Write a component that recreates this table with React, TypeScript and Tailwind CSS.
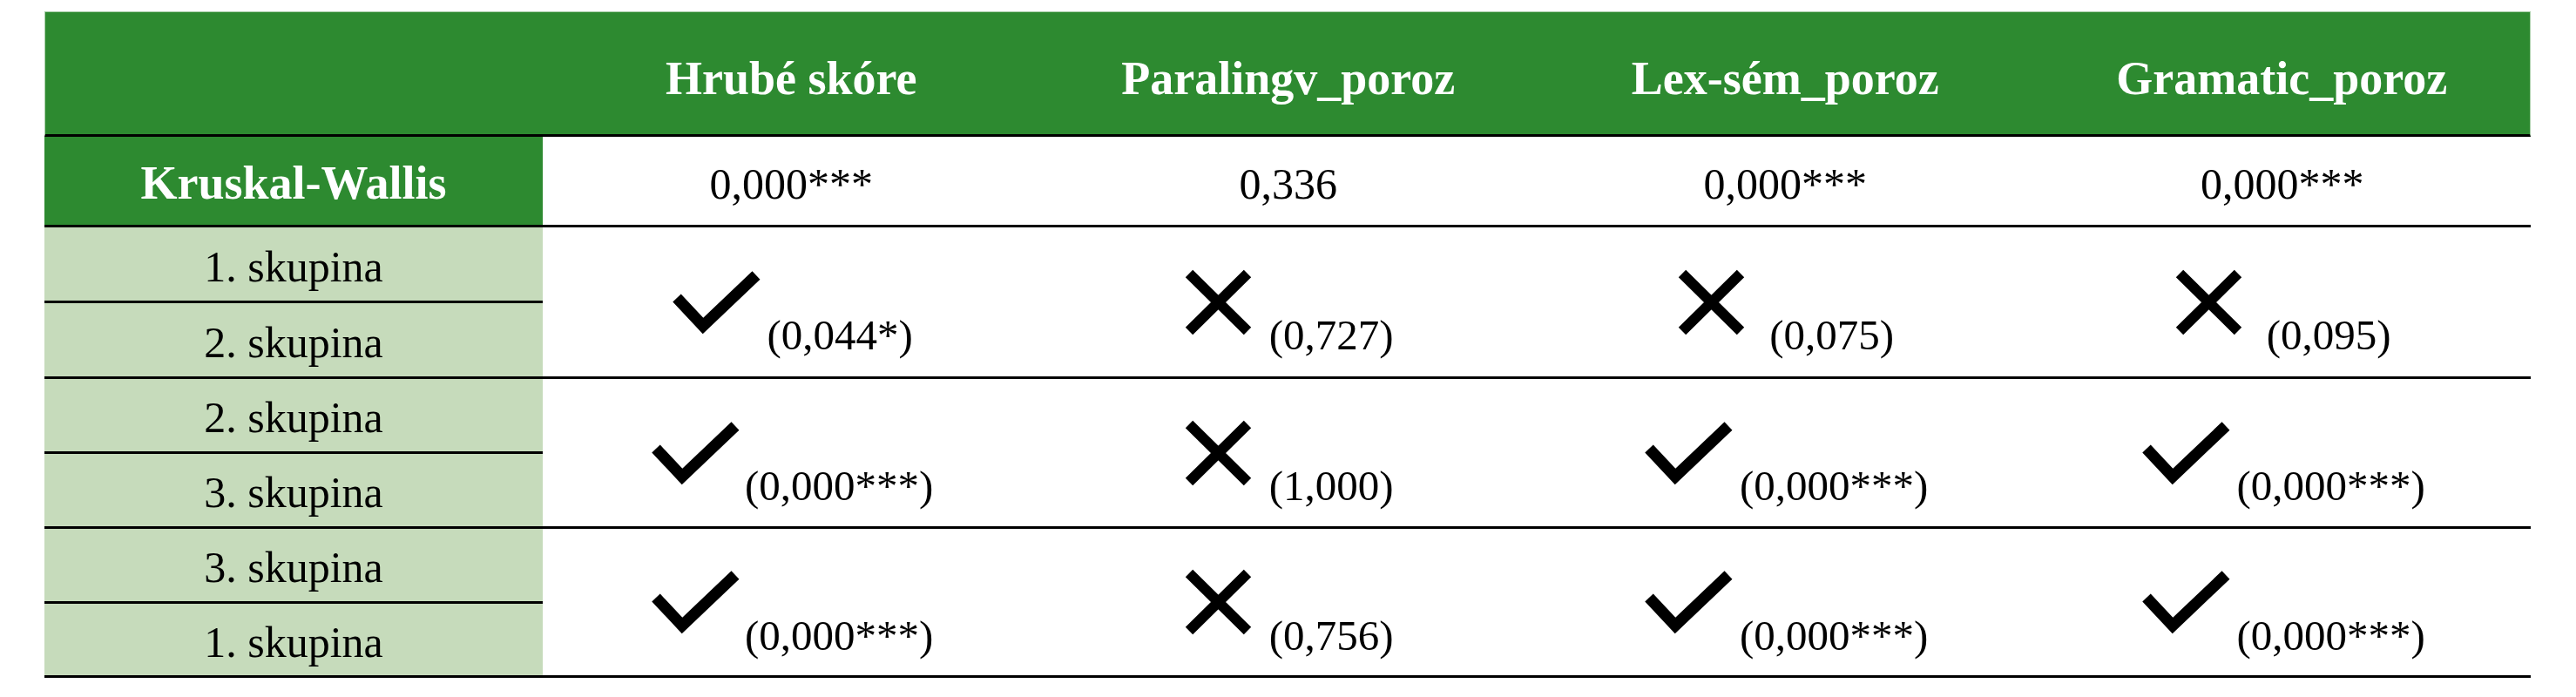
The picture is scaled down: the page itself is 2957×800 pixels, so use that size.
import React from 'react';

type Cell = { ok: boolean; p: string; gap: string };

interface Group {
  first: string;
  second: string;
  cells: Cell[];
}

const groups: Group[] = [
  {
    first: '1. skupina',
    second: '2. skupina',
    cells: [
      { ok: true, p: '(0,044*)', gap: 'gap-[6px]' },
      { ok: false, p: '(0,727)', gap: 'gap-[18px]' },
      { ok: false, p: '(0,075)', gap: 'gap-[26px]' },
      { ok: false, p: '(0,095)', gap: 'gap-[26px]' },
    ],
  },
  {
    first: '2. skupina',
    second: '3. skupina',
    cells: [
      { ok: true, p: '(0,000***)', gap: 'gap-[4px]' },
      { ok: false, p: '(1,000)', gap: 'gap-[18px]' },
      { ok: true, p: '(0,000***)', gap: 'gap-[6px]' },
      { ok: true, p: '(0,000***)', gap: 'gap-[6px]' },
    ],
  },
  {
    first: '3. skupina',
    second: '1. skupina',
    cells: [
      { ok: true, p: '(0,000***)', gap: 'gap-[4px]' },
      { ok: false, p: '(0,756)', gap: 'gap-[18px]' },
      { ok: true, p: '(0,000***)', gap: 'gap-[6px]' },
      { ok: true, p: '(0,000***)', gap: 'gap-[6px]' },
    ],
  },
];

const headers = ['Hrubé skóre', 'Paralingv_poroz', 'Lex-sém_poroz', 'Gramatic_poroz'];
const kruskal = ['0,000***', '0,336', '0,000***', '0,000***'];

function Check() {
  return (
    <svg width="106" height="78" viewBox="0 0 106 78" className="shrink-0">
      <path d="M8 34 L38 66 L99 8" fill="none" stroke="#000" strokeWidth="13" strokeLinejoin="miter" />
    </svg>
  );
}

function Cross() {
  return (
    <svg width="81" height="80" viewBox="0 0 81 80" className="shrink-0">
      <path d="M7 7 L74 73 M74 7 L7 73" fill="none" stroke="#000" strokeWidth="12" />
    </svg>
  );
}

export default function App() {
  return (
    <div className="min-h-[800px] bg-white pt-[13px] pl-[51px]">
      <div className="grid w-[2854px] grid-cols-[572px_repeat(4,1fr)] grid-rows-[144px_104px_87px_87px_86px_86px_86px_85px] font-['Liberation_Serif',serif] text-black">
        {/* hlavička */}
        <div className="border-t border-l border-[#a9cfa9] border-b-[3px] border-b-black bg-[#2d8a30]" />
        {headers.map((h, i) => (
          <div
            key={h}
            className={`flex items-center justify-center border-t border-[#a9cfa9] border-b-[3px] border-b-black bg-[#2d8a30] pt-[12px] text-[54px] font-bold text-white ${
              i === headers.length - 1 ? 'border-r' : ''
            }`}
          >
            {h}
          </div>
        ))}

        {/* Kruskal-Wallis */}
        <div className="flex items-center justify-center border-b-[3px] border-black bg-[#2d8a30] pt-[6px] text-[54px] font-bold text-white">
          Kruskal-Wallis
        </div>
        {kruskal.map((k, i) => (
          <div key={i} className="flex items-center justify-center border-b-[3px] border-black pt-[8px] text-[50px]">
            {k}
          </div>
        ))}

        {/* skupiny */}
        {groups.map((g, gi) => (
          <React.Fragment key={gi}>
            <div className="flex items-center justify-center border-b-[3px] border-black bg-[#c6dbbb] pt-[6px] text-[50px]">
              {g.first}
            </div>
            {g.cells.map((c, ci) => (
              <div key={ci} className="row-span-2 flex items-center justify-center border-b-[3px] border-black">
                <div className={`flex items-center ${c.gap}`}>
                  {c.ok ? <Check /> : <Cross />}
                  <span className="translate-y-[38px] text-[49px] leading-none">{c.p}</span>
                </div>
              </div>
            ))}
            <div className="flex items-center justify-center border-b-[3px] border-black bg-[#c6dbbb] pt-[6px] text-[50px]">
              {g.second}
            </div>
          </React.Fragment>
        ))}
      </div>
    </div>
  );
}
